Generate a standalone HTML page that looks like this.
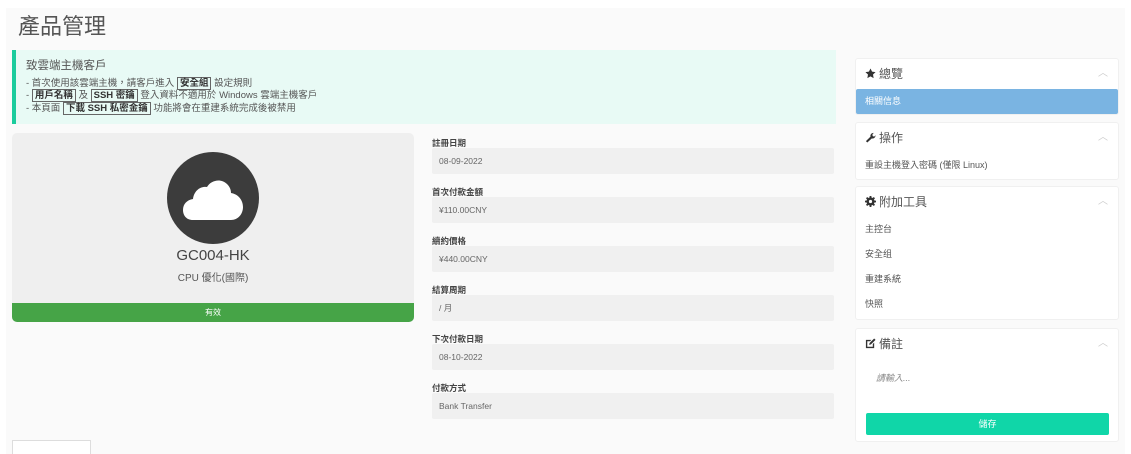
<!DOCTYPE html>
<html><head><meta charset="utf-8"><style>
*{box-sizing:border-box;margin:0;padding:0}
body{width:1131px;height:454px;overflow:hidden;background:#fff;font-family:"Liberation Sans","Noto Sans CJK TC",sans-serif;color:#555;position:relative}
.wrap{position:absolute;left:6px;top:8px;width:1119px;height:446px;background:#fafafa}
.abs{position:absolute}
h1{position:absolute;left:18px;top:9px;font-size:22px;font-weight:normal;color:#555}
.alert{left:12px;top:50px;width:824px;height:74px;background:#e8faf5;border-left:4px solid #1bcc9d;padding:10px 10px;font-size:9.5px;line-height:12.5px;color:#555}
.alert .t{font-size:11.5px;margin-bottom:5px;color:#555}
.alert b{border:1px solid #666;padding:0 2px;color:#333;font-weight:bold}
.card{left:12px;top:133px;width:402px;height:189px;border-radius:5px;background:#efefef;overflow:hidden}
.bar{position:absolute;left:0;bottom:0;width:100%;height:19px;background:#46a447;color:#fff;font-size:8px;text-align:center;line-height:19px}
.lbl{position:absolute;left:432px;font-size:8.5px;color:#444;font-weight:bold}
.box{position:absolute;left:432px;width:402px;height:26px;background:#f0f0f0;border-radius:2px;font-size:8.5px;color:#666;padding-left:7px;line-height:26px}
.pan{position:absolute;left:855px;width:264px;background:#fff;border:1px solid #f0f0f0;border-radius:3px}
.ph{height:30px;padding-left:9px;line-height:30px;font-size:12px;color:#555;position:relative}
.ph svg{vertical-align:-1px;margin-right:3px}
.ph .c{position:absolute;right:10px;top:0;color:#ccc;font-size:10px}
.it{font-size:9px;color:#555;padding-left:9px;height:25px;line-height:25px}
</style></head><body>
<div class="wrap"></div>
<h1>產品管理</h1>
<div class="abs alert"><div class="t">致雲端主機客戶</div>
- 首次使用該雲端主機，請客戶進入 <b>安全組</b> 設定規則<br>
- <b>用戶名稱</b> 及 <b>SSH 密鑰</b> 登入資料不適用於 Windows 雲端主機客戶<br>
- 本頁面 <b>下載 SSH 私密金鑰</b> 功能將會在重建系統完成後被禁用</div>
<div class="abs card">
<div class="abs" style="left:155px;top:19px;width:92px;height:92px;border-radius:50%;background:#3c3c3c"></div>
<svg class="abs" style="left:171px;top:45px" width="60" height="42" viewBox="0 0 60 42"><path d="M10 42 C3 42 0 37 0 32 C0 26 4 22 10 21 C11 13 17 8 24 9 C28 2 38 0 44 6 C47 9 48 12 48 15 C55 16 60 22 60 29 C60 36 55 42 48 42 Z" fill="#fff"/></svg>
<div class="abs" style="left:0;width:100%;top:114px;text-align:center;font-size:15px;color:#444">GC004-HK</div>
<div class="abs" style="left:0;width:100%;top:136px;text-align:center;font-size:10px;color:#555">CPU 優化(國際)</div>
<div class="bar">有效</div></div>
<div class="lbl" style="top:137px">註冊日期</div><div class="box" style="top:148px">08-09-2022</div>
<div class="lbl" style="top:186px">首次付款金額</div><div class="box" style="top:197px">¥110.00CNY</div>
<div class="lbl" style="top:235px">續約價格</div><div class="box" style="top:246px">¥440.00CNY</div>
<div class="lbl" style="top:284px">結算周期</div><div class="box" style="top:295px">/ 月</div>
<div class="lbl" style="top:333px">下次付款日期</div><div class="box" style="top:344px">08-10-2022</div>
<div class="lbl" style="top:382px">付款方式</div><div class="box" style="top:393px">Bank Transfer</div>
<div class="abs" style="left:12px;top:440px;width:79px;height:14px;border:1px solid #ddd;border-bottom:none;background:#fff"></div>

<div class="pan" style="top:58px;height:57px"><div class="ph"><svg width="11" height="11" viewBox="0 0 24 24"><path d="M12 1l3.4 7 7.6 1-5.5 5.3 1.3 7.7L12 18.4 5.2 22l1.3-7.7L1 9l7.6-1z" fill="#333"/></svg>總覽<span class="c">︿</span></div>
<div style="background:#7ab4e2;color:#fff;font-size:9px;height:25px;line-height:25px;padding-left:9px;border-radius:2px">相關信息</div></div>
<div class="pan" style="top:122px;height:58px"><div class="ph"><svg width="11" height="11" viewBox="0 0 24 24"><path d="M2 20l10-10c-1-4 2-8 7-8l-3 4 1 3 3 1 3-3c0 5-4 8-8 7L5 23z" fill="#333"/></svg>操作<span class="c">︿</span></div><div class="it">重設主機登入密碼 (僅限 Linux)</div></div>
<div class="pan" style="top:186px;height:134px"><div class="ph"><svg width="11" height="11" viewBox="0 0 24 24"><path d="M10 1h4l1 3 3 1.5 3-1.5 2.5 3-2 2.5.5 3.5 3 1.5-1 4-3 .5-2 2.5.5 3-3.5 1.5-2.5-2h-3L6 24l-3.5-1.5.5-3L1 17l-3-.5" fill="none"/><circle cx="12" cy="12" r="9" fill="#333"/><circle cx="12" cy="12" r="3.5" fill="#fff"/><g stroke="#333" stroke-width="4"><path d="M12 0v24M0 12h24M3.5 3.5l17 17M20.5 3.5l-17 17"/></g><circle cx="12" cy="12" r="3.5" fill="#fff"/></svg>附加工具<span class="c">︿</span></div>
<div class="it">主控台</div><div class="it">安全组</div><div class="it">重建系統</div><div class="it">快照</div></div>
<div class="pan" style="top:328px;height:114px"><div class="ph"><svg width="11" height="11" viewBox="0 0 24 24"><path d="M2 4h12l-3 3H5v12h12v-6l3-3v12H2z" fill="#333"/><path d="M9 15l1-4 10-10 3 3-10 10z" fill="#333"/></svg>備註<span class="c">︿</span></div>
<div style="font-size:9px;color:#888;font-style:italic;padding:12px 0 0 20px">請輸入...</div>
<div class="abs" style="left:10px;top:84px;width:243px;height:22px;background:#10d6a8;border-radius:2px;color:#fff;font-size:9px;text-align:center;line-height:22px">儲存</div></div>
</body></html>
